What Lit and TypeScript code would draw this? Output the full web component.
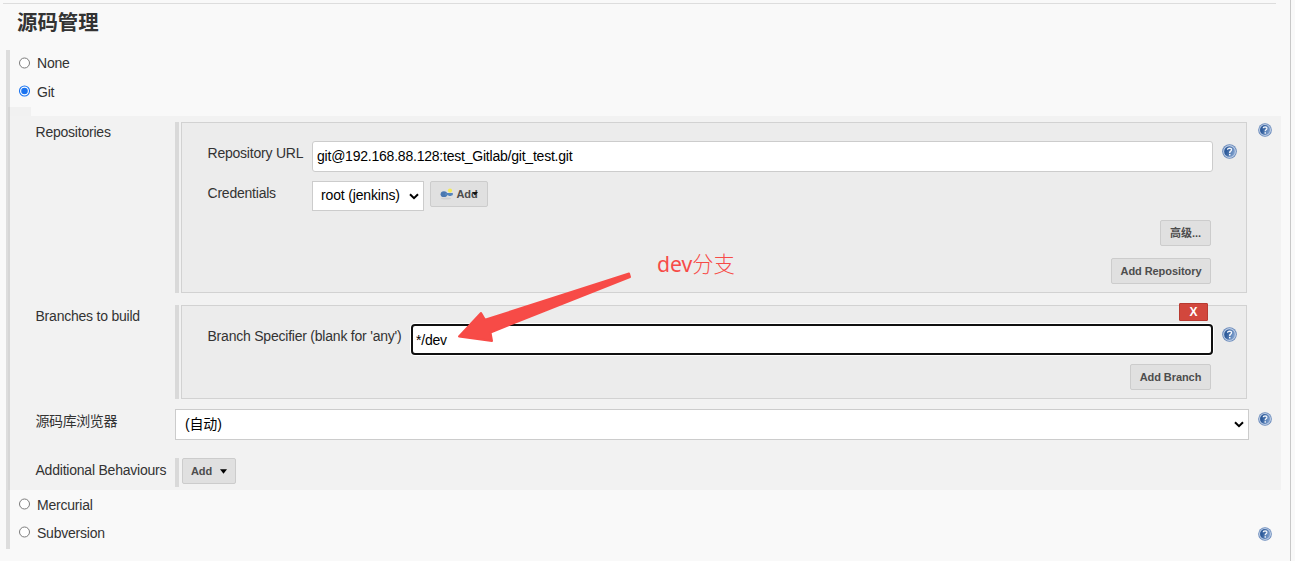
import { LitElement, html, css, svg } from "lit";
import { customElement, property } from "lit/decorators.js";

@customElement("help-icon")
class HelpIcon extends LitElement {
  static styles = css`
    :host { display: block; width: 15px; height: 15px; }
    svg { display: block; width: 100%; height: 100%; }
  `;
  render() {
    return html`<svg viewBox="0 0 15 15">
      <defs>
        <linearGradient id="g" x1="0" y1="0.2" x2="1" y2="0.5">
          <stop offset="0.3" stop-color="#2f5c9b" /><stop offset="1" stop-color="#86a6d2" />
        </linearGradient>
      </defs>
      <circle cx="7.5" cy="7.5" r="7.3" fill="#6587ba" />
      <circle cx="7.5" cy="7.5" r="5.9" fill="url(#g)" stroke="#bccce4" stroke-width="1.1" />
      <path d="M5.5 5.7 Q5.6 4.1 7.6 4.1 Q9.6 4.2 9.5 5.8 Q9.4 6.8 8.4 7.4 Q7.7 7.9 7.7 8.9" fill="none" stroke="#f4f7fc" stroke-width="1.4" />
      <rect x="7" y="9.9" width="1.5" height="1.5" fill="#fff" />
    </svg>`;
  }
}

@customElement("radio-row")
class RadioRow extends LitElement {
  @property() label = "";
  @property({ type: Boolean }) checked = false;
  static styles = css`
    :host { display: flex; align-items: center; height: 29px; }
    svg { display: block; margin: 0 7px 1px 8px; }
  `;
  render() {
    return html`<svg width="12" height="12" viewBox="0 0 12 12">
        ${this.checked
          ? svg`<circle cx="6.5" cy="6" r="5" fill="#fff" stroke="#1a73f0" stroke-width="1.1"/><circle cx="6.5" cy="6" r="3.3" fill="#1a73f0"/>`
          : svg`<circle cx="6.5" cy="6" r="5" fill="#fff" stroke="#7c7c7c" stroke-width="1"/>`}
      </svg><span>${this.label}</span><slot></slot>`;
  }
}

const chevron = html`<svg class="chev" width="10" height="7" viewBox="0 0 10 7"><path d="M1 1.2 L5 5.2 L9 1.2" fill="none" stroke="#000" stroke-width="2" /></svg>`;

@customElement("app-root")
class AppRoot extends LitElement {
  static styles = css`
    :host {
      display: block; position: relative; box-sizing: border-box;
      width: 1295px; height: 561px; overflow: hidden;
      background: #f9f9f9; color: #333; letter-spacing: -0.22px;
      font: 14px/20px "Liberation Sans", Arial, "Noto Sans CJK SC", sans-serif;
    }
    * { box-sizing: border-box; }
    .page { width: 1291px; height: 561px; border-right: 1px solid #c8c8c8; padding: 3px 0 0 3px; }
    .rule { width: 1273px; height: 1px; background: #ddd; }
    h1 { margin: 5px 0 0 14px; height: 28px; font-size: 20.4px; line-height: 28px; font-weight: 700; letter-spacing: 0; }
    .options { margin: 13px 0 0 3px; width: 1275px; height: 499px; border-left: 4px solid #ddd; }
    .none { height: 26px; }
    .git { height: 31px; }
    .tab { width: 23px; height: 9px; margin-left: -2px; background: rgba(0, 0, 0, .03); }
    .config { margin-left: -2px; width: 1273px; height: 374px; padding-top: 6px; background: rgba(0, 0, 0, .028); }
    .row { display: grid; grid-template-columns: 139.5px 1fr; padding-left: 27.5px; }
    .name { white-space: nowrap; }
    .cjk { letter-spacing: -0.42px; }
    .line { display: flex; align-items: flex-start; }
    .body { display: flex; align-items: flex-start; }
    .strip { width: 4px; margin-right: 2px; background: #d9d9d9; align-self: stretch; }
    .panel { width: 1066px; border: 1px solid #d2d2d2; background: #ececec; padding-left: 25.5px; }
    .repos { height: 171px; padding-top: 18px; }
    .branches { height: 94px; padding-top: 18px; position: relative; }
    .ohelp { width: 14px; height: 14px; margin: 1px 0 0 11px; }
    .lab { width: 104.5px; padding-top: 2px; white-space: nowrap; }
    .lab2 { width: 203.5px; padding-top: 2px; white-space: nowrap; }
    .field { display: block; margin: 0; outline: none; border: 1px solid #ccc; border-radius: 3px; background: #fff; color: #000; height: 31px; padding: 0 5px 1px 4px; font: inherit; letter-spacing: inherit; }
    .url { width: 901px; }
    .spec { width: 802px; border: 2px solid #101010; box-shadow: 0 0 0 1px #fff; border-radius: 4px; padding: 0 4px 0 3px; }
    .ihelp { margin: 3px 0 0 9px; }
    .select { display: flex; align-items: center; justify-content: space-between; border: 1px solid #ccc; background: #fff; color: #000; padding: 0 4px 2px 8px; letter-spacing: -0.15px; }
    .cred { width: 112px; height: 30px; }
    .browser { width: 1074px; height: 31px; padding-left: 9px; padding-bottom: 1px; }
    .chev { display: block; margin-top: 2px; }
    .browser .chev { margin-top: 0; }
    .btn { display: flex; align-items: center; justify-content: center; height: 26px; border: 1px solid #ccc; border-radius: 2px; background: #e0e0e0; color: #4d4d4d; font: bold 11px/14px "Liberation Sans", Arial, "Noto Sans CJK SC", sans-serif; letter-spacing: -0.07px; white-space: nowrap; padding: 0; }
    .add { width: 58px; margin-left: 6px; }
    .right { display: flex; justify-content: flex-end; padding-right: 35px; }
    .del { position: absolute; top: -3px; left: 997px; width: 29px; height: 18px; background: #d2473d; border: 1px solid #b83a31; border-radius: 1px; color: #fff; display: flex; align-items: center; justify-content: center; font: bold 12px/14px "Liberation Sans", Arial, sans-serif; }
    .arrow { position: absolute; left: 450px; top: 265px; }
    .note { position: absolute; left: 657px; top: 248px; color: #f74b47; font: 400 21.2px/30px "Noto Sans", "Noto Sans CJK SC", sans-serif; white-space: nowrap; letter-spacing: 0; }
    .thin { font-weight: 300; font-family: "Noto Sans CJK SC", sans-serif; }
  `;
  render() {
    return html`<div class="page">
      <div class="rule"></div>
      <h1>源码管理</h1>
      <div class="options">
        <radio-row class="none" label="None"></radio-row>
        <radio-row class="git" label="Git" checked></radio-row>
        <div class="tab"></div>
        <div class="config">
          <div class="row" style="height:183px">
            <div class="name">Repositories</div>
            <div class="body" style="height:171px">
              <div class="strip"></div>
              <div class="panel repos">
                <div class="line" style="height:40px">
                  <div class="lab">Repository URL</div>
                  <input class="field url" value="git@192.168.88.128:test_Gitlab/git_test.git" />
                  <help-icon class="ihelp"></help-icon>
                </div>
                <div class="line" style="height:39px">
                  <div class="lab">Credentials</div>
                  <div class="select cred"><span>root (jenkins)</span>${chevron}</div>
                  <div class="btn add">
                    <svg width="14" height="12" viewBox="0 0 14 12"><ellipse cx="6" cy="10.6" rx="5" ry="1" fill="#d0d0d0" /><circle cx="10" cy="2.6" r="2.1" fill="#f3ea5a" /><ellipse cx="3.9" cy="6.2" rx="3.3" ry="2.9" fill="#4a78b0" /><path d="M5 4.9h7.8v2.3H11.5v.8H8.5v-.8H5z" fill="#5485bd" /></svg>
                    <span style="margin-left:2px">Add</span>
                    <svg style="margin-left:-6px" width="6" height="6" viewBox="0 0 6 6"><path d="M0 1h6L3 4.5z" fill="#111" /></svg>
                  </div>
                </div>
                <div class="right" style="height:38px"><div class="btn" style="width:51px">高级...</div></div>
                <div class="right"><div class="btn" style="width:100px">Add Repository</div></div>
              </div>
              <help-icon class="ohelp"></help-icon>
            </div>
          </div>
          <div class="row" style="height:104px">
            <div class="name" style="padding-top:1px">Branches to build</div>
            <div class="body" style="height:94px">
              <div class="strip"></div>
              <div class="panel branches">
                <div class="del">X</div>
                <div class="line" style="height:40px">
                  <div class="lab2">Branch Specifier (blank for 'any')</div>
                  <input class="field spec" value="*/dev" />
                  <help-icon class="ihelp"></help-icon>
                </div>
                <div class="right"><div class="btn" style="width:81px">Add Branch</div></div>
              </div>
            </div>
          </div>
          <div class="row" style="height:49px">
            <div class="name cjk" style="padding-top:2px">源码库浏览器</div>
            <div class="body">
              <div class="select browser"><span>(自动)</span>${chevron}</div>
              <help-icon class="ohelp" style="margin:3px 0 0 9px"></help-icon>
            </div>
          </div>
          <div class="row" style="height:32px">
            <div class="name" style="padding-top:2px">Additional Behaviours</div>
            <div class="body" style="height:29px">
              <div class="strip" style="margin-right:3px"></div>
              <div class="btn" style="width:54px"><span>Add</span><svg style="margin-left:8px" width="7" height="5" viewBox="0 0 7 5"><path d="M0 .3h7L3.5 4.7z" fill="#000" /></svg></div>
            </div>
          </div>
        </div>
        <radio-row label="Mercurial"></radio-row>
        <radio-row label="Subversion" style="height:27px"><help-icon class="ohelp" style="margin:3px 9px 0 auto"></help-icon></radio-row>
      </div>
    </div>
    <svg class="arrow" width="190" height="85" viewBox="450 265 190 85"><path d="M629 273.5 L630 277 L490.5 332.5 L492 341 L459 336.5 L481 313 L485 319.8 Z" fill="#f74b47" stroke="#f74b47" stroke-width="2" stroke-linejoin="round" /></svg>
    <div class="note">dev<span class="thin">分支</span></div>`;
  }
}
